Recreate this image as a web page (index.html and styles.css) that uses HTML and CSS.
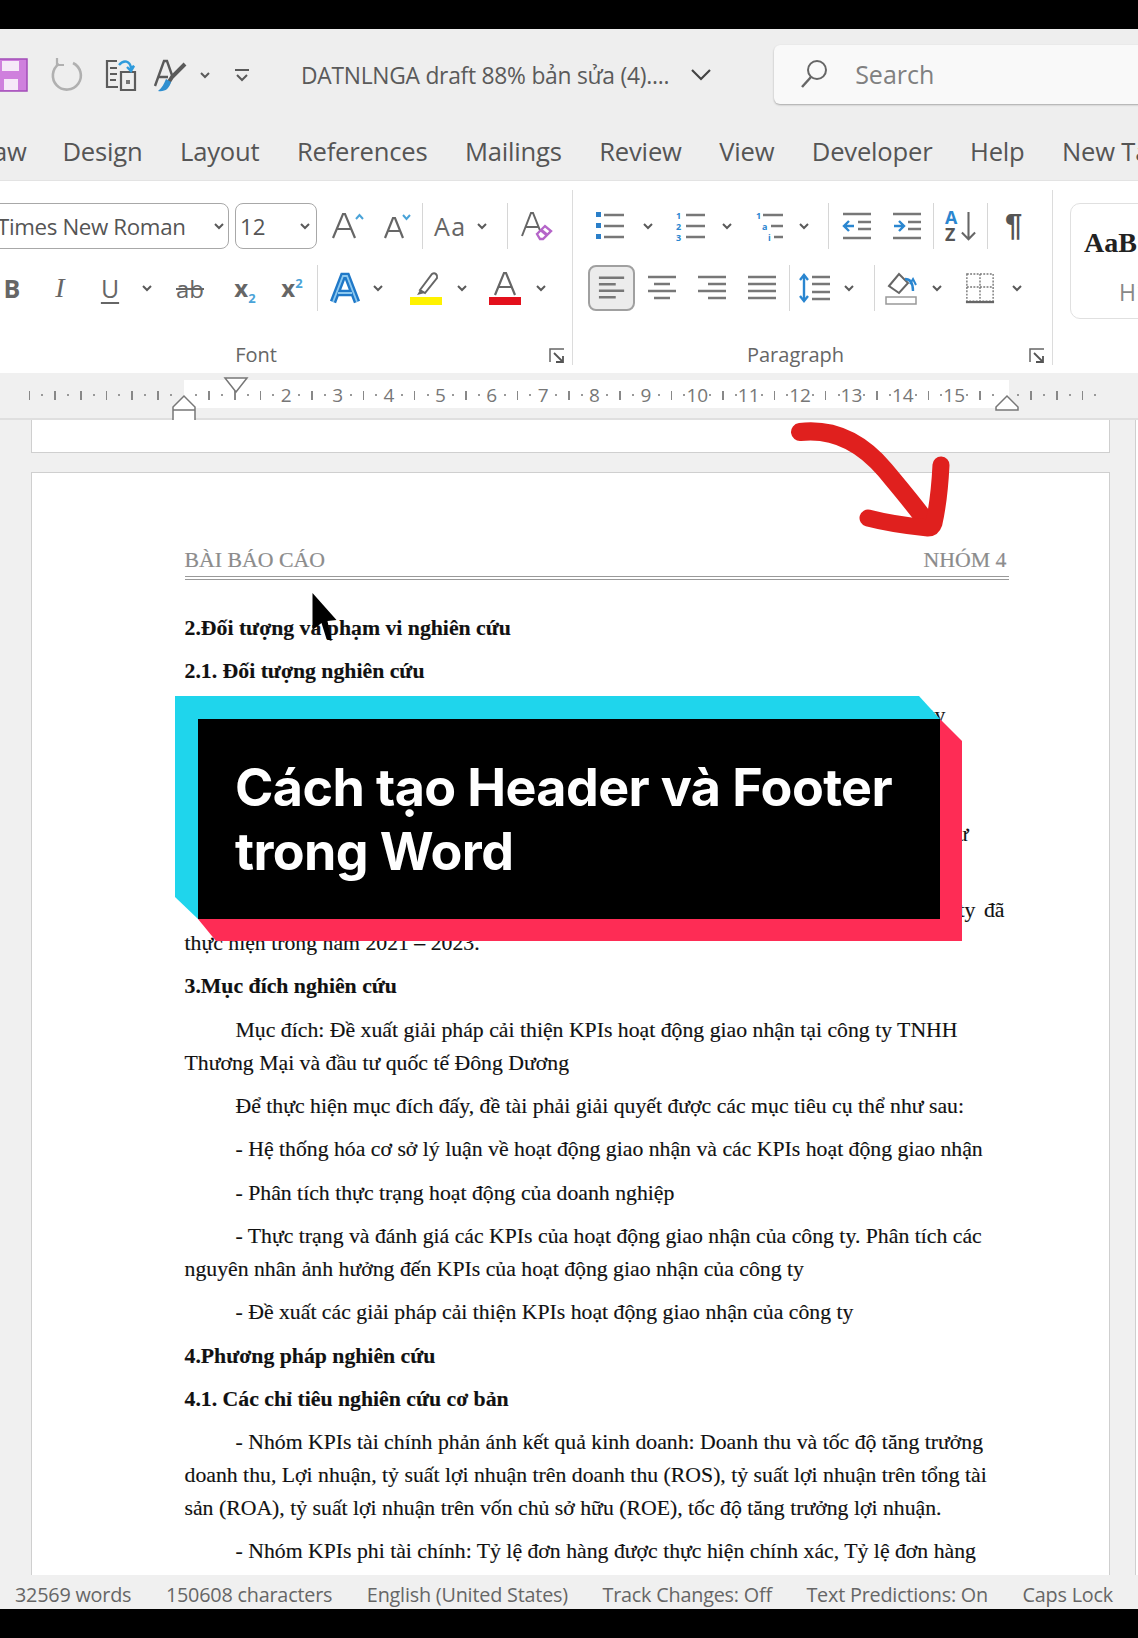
FILE: index.html
```html
<!DOCTYPE html>
<html lang="vi">
<head>
<meta charset="utf-8">
<title>Cách tạo Header và Footer trong Word</title>
<link rel="stylesheet" href="styles.css">
</head>
<body>
<svg class="defs" width="0" height="0">
  <symbol id="chev" viewBox="0 0 12 12"><path d="M2 4l4 4 4-4" fill="none" stroke="#5a5a5a" stroke-width="2"/></symbol>
  <symbol id="lines-left" viewBox="0 0 30 30"><path d="M1 4h27M1 11h18M1 18h27M1 25h18" stroke="#777" stroke-width="2.6"/></symbol>
  <symbol id="lines-center" viewBox="0 0 30 30"><path d="M1 4h28M7 11h16M1 18h28M7 25h16" stroke="#777" stroke-width="2.6"/></symbol>
  <symbol id="lines-right" viewBox="0 0 30 30"><path d="M1 4h28M11 11h18M1 18h28M11 25h18" stroke="#777" stroke-width="2.6"/></symbol>
  <symbol id="lines-just" viewBox="0 0 30 30"><path d="M1 4h28M1 11h28M1 18h28M1 25h28" stroke="#777" stroke-width="2.6"/></symbol>
</svg>
<div class="app">
  <div class="black"></div>

  <header class="titlebar">
    <div class="qat">
      <svg class="i-save" viewBox="0 0 28 34"><rect x="-6" y="1" width="33" height="32" fill="#cf80dd" stroke="#a34cb8" stroke-width="1.500"/><rect x="2" y="3" width="17" height="10" fill="#f6e9f8"/><rect x="4" y="21" width="14" height="11" fill="#f6e9f8"/></svg>
      <svg class="i-redo m23" viewBox="0 0 32 34"><path d="M9 6A14 14 0 1 0 23 5" fill="none" stroke="#b0b0b0" stroke-width="2.600"/><path d="M7 0v7h7" fill="none" stroke="#b0b0b0" stroke-width="2.200"/></svg>
      <svg class="i-doc m23" viewBox="0 0 32 34"><path d="M12 3H2v26h11M5 10h7M5 16h7M5 22h6" fill="none" stroke="#5c5c5c" stroke-width="2.200"/><path d="M16 14h14v18H16z" fill="none" stroke="#5c5c5c" stroke-width="2.200"/><path d="M14 7c5-6 11-4 12 3l3-2-3 5-4-4" fill="none" stroke="#2f9bdc" stroke-width="2.400"/><rect x="21" y="22" width="4" height="4" fill="#777"/></svg>
      <svg class="i-brush m16" viewBox="0 0 32 34"><path d="M2 28L11 3h3l6 17M6 19h9" fill="none" stroke="#5a5a5a" stroke-width="2.400"/><path d="M32 6L19 19l-5 8" fill="none" stroke="#5a5a5a" stroke-width="4"/><path d="M5 33c7 1 11-2 13-9l-5-3c-2 5-4 9-8 12z" fill="#2f8fd0"/></svg>
      <svg class="chev m14"><use href="#chev"/></svg>
      <svg class="i-more m23" viewBox="0 0 16 16"><path d="M1 3h14" stroke="#5a5a5a" stroke-width="2"/><path d="M3 8l5 5 5-5" fill="none" stroke="#5a5a5a" stroke-width="2"/></svg>
      <span class="doc-title">DATNLNGA draft 88% bản sửa (4)....</span>
      <svg class="i-caret" viewBox="0 0 20 12"><path d="M1 1l9 9 9-9" fill="none" stroke="#444" stroke-width="2.200"/></svg>
      <div class="search">
        <svg class="i-search" viewBox="0 0 28 30"><circle cx="17" cy="11" r="9" fill="none" stroke="#666" stroke-width="2"/><path d="M11 18L2 28" stroke="#666" stroke-width="2.500"/></svg>
        <span>Search</span>
      </div>
    </div>
    <nav class="tabs">
      <span class="tab-cut">aw</span>
      <span>Design</span><span>Layout</span><span>References</span><span>Mailings</span><span>Review</span><span>View</span><span>Developer</span><span>Help</span><span>New Tab</span>
    </nav>
  </header>

  <section class="ribbon">
    <div class="group group-font">
      <div class="row">
        <div class="combo combo-font"><span>Times New Roman</span><svg class="chev"><use href="#chev"/></svg></div>
        <div class="combo combo-size"><span>12</span><svg class="chev"><use href="#chev"/></svg></div>
        <svg class="w33 m14" viewBox="0 0 33 32"><path d="M2 28L12 4h2l10 24M6 19h14" fill="none" stroke="#666" stroke-width="2.200"/><path d="M25 9l3.500-4 3.500 4" fill="none" stroke="#4aa3d8" stroke-width="2"/></svg>
        <svg class="w28 m20" viewBox="0 0 28 30"><path d="M1 27L9 7h2l8 20M4 20h12" fill="none" stroke="#666" stroke-width="2.200"/><path d="M19 4l3.500 4L26 4" fill="none" stroke="#4aa3d8" stroke-width="2"/></svg>
        <i class="sep m10"></i>
        <span class="aa m11">Aa</span>
        <svg class="chev m8"><use href="#chev"/></svg>
        <i class="sep m19"></i>
        <svg class="w32 m12" viewBox="0 0 32 32"><path d="M2 26L11 3h2l8 20M5 17h13" fill="none" stroke="#666" stroke-width="2"/><path d="M17 24l8-8 6 5-8 8h-3z" fill="#fff" stroke="#b565c9" stroke-width="2.400"/><path d="M21 20l6 5" stroke="#b565c9" stroke-width="3"/></svg>
      </div>
      <div class="row">
        <b class="fmt fmt-b">B</b>
        <i class="fmt fmt-i m28">I</i>
        <span class="fmt fmt-u m29">U</span>
        <svg class="chev m20"><use href="#chev"/></svg>
        <span class="fmt fmt-ab m20">ab</span>
        <span class="fmt fmt-x m23">x<sub>2</sub></span>
        <span class="fmt fmt-x m17">x<sup>2</sup></span>
        <i class="sep m10"></i>
        <svg class="w32 m11" viewBox="0 0 32 34"><path d="M4 31L14 5h4l10 26M9 22h14" fill="none" stroke="#1f78c8" stroke-width="6.500"/><path d="M4 31L14 5h4l10 26M9 22h14" fill="none" stroke="#8cc8ef" stroke-width="1.800"/></svg>
        <svg class="chev m11"><use href="#chev"/></svg>
        <svg class="w32 m26" viewBox="0 0 32 34"><path d="M10 19L22 3c3-2 6 1 5 4L15 22z" fill="#fff" stroke="#666" stroke-width="2"/><path d="M10 19l5 3-8 2z" fill="#666"/><rect x="0" y="26" width="32" height="8" fill="#fff200"/></svg>
        <svg class="chev m14"><use href="#chev"/></svg>
        <svg class="w32 m21" viewBox="0 0 32 34"><path d="M6 24L15 2h2l9 22M10 16h12" fill="none" stroke="#666" stroke-width="2.200"/><rect x="0" y="26" width="32" height="8" fill="#e3101c"/></svg>
        <svg class="chev m14"><use href="#chev"/></svg>
      </div>
      <div class="group-label">Font
        <svg class="launcher launcher-font" viewBox="0 0 16 16"><path d="M1 14V1h14" fill="none" stroke="#666" stroke-width="1.500"/><path d="M5 5l8 8M7 14h7V8" fill="none" stroke="#555" stroke-width="1.800"/></svg>
      </div>
    </div>

    <div class="group group-para">
      <div class="row">
        <svg class="w30 m22" viewBox="0 0 30 30"><path d="M9 4h20M9 15h20M9 26h20" stroke="#777" stroke-width="2.600"/><path d="M1 1h5v5H1zM1 12h5v5H1zM1 23h5v5H1z" fill="#2a7fc9"/></svg>
        <svg class="chev m17"><use href="#chev"/></svg>
        <svg class="w30 m21" viewBox="0 0 30 30"><path d="M11 4h19M11 15h19M11 26h19" stroke="#777" stroke-width="2.600"/><text x="1" y="8" class="num">1</text><text x="1" y="19" class="num">2</text><text x="1" y="30" class="num">3</text></svg>
        <svg class="chev m16"><use href="#chev"/></svg>
        <svg class="w28 m23" viewBox="0 0 28 30"><path d="M7 4h20M15 15h12M18 26h9" stroke="#777" stroke-width="2.600"/><text x="0" y="8" class="num">1</text><text x="6" y="19" class="num">a</text><text x="12" y="30" class="num">i</text></svg>
        <svg class="chev m14"><use href="#chev"/></svg>
        <i class="sep m18"></i>
        <svg class="w30 m13" viewBox="0 0 30 30"><path d="M1 3h28M16 11h13M16 18h13M1 27h28" stroke="#777" stroke-width="2.600"/><path d="M12 15H3M7 10l-5 5 5 5" fill="none" stroke="#2a86d0" stroke-width="2.400"/></svg>
        <svg class="w30 m20" viewBox="0 0 30 30"><path d="M1 3h28M16 11h13M16 18h13M1 27h28" stroke="#777" stroke-width="2.600"/><path d="M2 15h9M7 10l5 5-5 5" fill="none" stroke="#2a86d0" stroke-width="2.400"/></svg>
        <i class="sep m11"></i>
        <svg class="w33 m10" viewBox="0 0 33 34"><text x="0" y="15" class="sort-a">A</text><text x="0" y="33" class="sort-z">Z</text><path d="M25 2v29M18 24l7 7 7-7" fill="none" stroke="#666" stroke-width="2.200"/></svg>
        <i class="sep m10"></i>
        <span class="pilcrow m15">¶</span>
      </div>
      <div class="row">
        <span class="active m15"><svg class="w30"><use href="#lines-left"/></svg></span>
        <svg class="w30 m12"><use href="#lines-center"/></svg>
        <svg class="w30 m20"><use href="#lines-right"/></svg>
        <svg class="w30 m20"><use href="#lines-just"/></svg>
        <i class="sep m12"></i>
        <svg class="w32 m9" viewBox="0 0 32 30"><path d="M13 4h18M13 11h18M13 19h18M13 26h18" stroke="#777" stroke-width="2.600"/><path d="M5 2v26" stroke="#2a86d0" stroke-width="2.400"/><path d="M1 7l4-5 4 5M1 23l4 5 4-5" fill="none" stroke="#2a86d0" stroke-width="2.400"/></svg>
        <svg class="chev m12"><use href="#chev"/></svg>
        <i class="sep m19"></i>
        <svg class="w32 m10" viewBox="0 0 32 34"><path d="M4 15L14 3l9 9-9 10z" fill="none" stroke="#666" stroke-width="2"/><path d="M20 8c6 0 8 5 8 12" fill="none" stroke="#2a86d0" stroke-width="2.400"/><path d="M25 13l3-5 3 6" fill="none" stroke="#2a86d0" stroke-width="2"/><rect x="1" y="26" width="30" height="7" fill="#fff" stroke="#999" stroke-width="1.500"/></svg>
        <svg class="chev m14"><use href="#chev"/></svg>
        <svg class="w30 m22" viewBox="0 0 30 32"><path d="M1 1h28v29H1zM1 15h28M15 1v29" fill="none" stroke="#777" stroke-width="1.500" stroke-dasharray="2 1.500"/><path d="M0 31h30" stroke="#666" stroke-width="2.400"/></svg>
        <svg class="chev m16"><use href="#chev"/></svg>
      </div>
      <div class="group-label">Paragraph
        <svg class="launcher launcher-para" viewBox="0 0 16 16"><path d="M1 14V1h14" fill="none" stroke="#666" stroke-width="1.500"/><path d="M5 5l8 8M7 14h7V8" fill="none" stroke="#555" stroke-width="1.800"/></svg>
      </div>
    </div>

    <div class="styles">
      <span class="style-sample">AaB</span>
      <span class="style-name">H1</span>
    </div>
  </section>

  <div class="ruler">
    <div class="ruler-paper"></div>
    <div class="ruler-marks">
      <span><u></u></span><span><s></s></span><span><u></u></span><span><s></s></span><span><u></u></span><span><s></s></span><span><u></u></span><span><s></s></span><span><u></u></span><span><s></s></span><span><u></u></span><span><s></s></span><span></span>
      <span><s></s></span><span><u></u></span><span><s></s></span><span><u></u></span>
      <span><s></s></span><span><u></u></span><span><s></s></span><span>2</span>
      <span><s></s></span><span><u></u></span><span><s></s></span><span>3</span>
      <span><s></s></span><span><u></u></span><span><s></s></span><span>4</span>
      <span><s></s></span><span><u></u></span><span><s></s></span><span>5</span>
      <span><s></s></span><span><u></u></span><span><s></s></span><span>6</span>
      <span><s></s></span><span><u></u></span><span><s></s></span><span>7</span>
      <span><s></s></span><span><u></u></span><span><s></s></span><span>8</span>
      <span><s></s></span><span><u></u></span><span><s></s></span><span>9</span>
      <span><s></s></span><span><u></u></span><span><s></s></span><span>10</span>
      <span><s></s></span><span><u></u></span><span><s></s></span><span>11</span>
      <span><s></s></span><span><u></u></span><span><s></s></span><span>12</span>
      <span><s></s></span><span><u></u></span><span><s></s></span><span>13</span>
      <span><s></s></span><span><u></u></span><span><s></s></span><span>14</span>
      <span><s></s></span><span><u></u></span><span><s></s></span><span>15</span>
      <span><s></s></span><span><u></u></span><span><s></s></span><span></span>
      <span><s></s></span><span><u></u></span><span><s></s></span><span><u></u></span><span><s></s></span><span><u></u></span><span><s></s></span>
    </div>
    <svg class="marker marker-first" viewBox="0 0 24 24"><path d="M1 1h22L12 15z" fill="#fff" stroke="#777" stroke-width="1.500"/></svg>
    <svg class="marker marker-hang" viewBox="0 0 24 27"><path d="M1 12L12 1l11 11v14H1zM1 15h22" fill="#fff" stroke="#777" stroke-width="1.500"/></svg>
    <svg class="marker marker-right" viewBox="0 0 24 16"><path d="M1 12L12 1l11 11v3H1z" fill="#fff" stroke="#777" stroke-width="1.500"/></svg>
  </div>

  <main class="doc">
    <div class="page-prev"></div>
    <article class="page">
      <div class="page-header"><span>BÀI BÁO CÁO</span><span>NHÓM 4</span></div>
      <p class="bold">2.Đối tượng và phạm vi nghiên cứu</p>
      <p class="bold">2.1. Đối tượng nghiên cứu</p>
      <p class="in pr-a"><span class="jl">Đối tượng nghiên cứu là hoạt động giao nhận tại công ty</span><span class="out">TNHH Thương Mại và đầu tư quốc tế Đông Dương</span></p>
      <p class="bold">2.2. Phạm vi nghiên cứu</p>
      <p class="in pr-b"><span class="jl">Về không gian: Công ty TNHH Thương Mại và đầu tư</span><span class="out">quốc tế Đông Dương</span></p>
      <p class="in pr-c"><span class="jl">Về thời gian: Phân tích số liệu về hoạt động giao nhận và các KPIs của công ty đã</span><span class="out">thực hiện trong năm 2021 – 2023.</span></p>
      <p class="bold">3.Mục đích nghiên cứu</p>
      <p class="in">Mục đích: Đề xuất giải pháp cải thiện KPIs hoạt động giao nhận tại công ty TNHH<span class="out">Thương Mại và đầu tư quốc tế Đông Dương</span></p>
      <p class="in">Để thực hiện mục đích đấy, đề tài phải giải quyết được các mục tiêu cụ thể như sau:</p>
      <p class="in">- Hệ thống hóa cơ sở lý luận về hoạt động giao nhận và các KPIs hoạt động giao nhận</p>
      <p class="in">- Phân tích thực trạng hoạt động của doanh nghiệp</p>
      <p class="in">- Thực trạng và đánh giá các KPIs của hoạt động giao nhận của công ty. Phân tích các<span class="out">nguyên nhân ảnh hưởng đến KPIs của hoạt động giao nhận của công ty</span></p>
      <p class="in">- Đề xuất các giải pháp cải thiện KPIs hoạt động giao nhận của công ty</p>
      <p class="bold">4.Phương pháp nghiên cứu</p>
      <p class="bold">4.1. Các chỉ tiêu nghiên cứu cơ bản</p>
      <p class="in">- Nhóm KPIs tài chính phản ánh kết quả kinh doanh: Doanh thu và tốc độ tăng trưởng<span class="out">doanh thu, Lợi nhuận, tỷ suất lợi nhuận trên doanh thu (ROS), tỷ suất lợi nhuận trên tổng tài</span><span class="out">sản (ROA), tỷ suất lợi nhuận trên vốn chủ sở hữu (ROE), tốc độ tăng trưởng lợi nhuận.</span></p>
      <p class="in">- Nhóm KPIs phi tài chính: Tỷ lệ đơn hàng được thực hiện chính xác, Tỷ lệ đơn hàng<span class="out">giao đúng hạn, Tỷ lệ hàng hóa bị hư hỏng, mất mát</span></p>
    </article>
    <div class="page-next"></div>
    <svg class="cursor" viewBox="0 0 26 50"><path d="M1 1l24 27-9 1 4 20-5-2-5-16-9 7z" fill="#000"/></svg>
    <svg class="arrow" viewBox="0 0 170 120"><path d="M15 12C50 8 78 24 100 50 120 74 132 88 143 104" fill="none" stroke="#e0201e" stroke-width="18" stroke-linecap="round"/><path d="M156 45c-1 20-3 40-7 58-1 3-3 5-6 5-20-2-41-5-60-10" fill="none" stroke="#e0201e" stroke-width="17" stroke-linecap="round" stroke-linejoin="round"/></svg>
    <div class="banner">
      <h1>Cách tạo Header và Footer<br>trong Word</h1>
    </div>
  </main>

  <footer class="status">
    <span>32569 words</span><span>150608 characters</span><span>English (United States)</span><span>Track Changes: Off</span><span>Text Predictions: On</span><span>Caps Lock</span>
  </footer>
  <div class="black"></div>
</div>
</body>
</html>
```

FILE: styles.css
```css
* { box-sizing: border-box; }
html, body { margin: 0; padding: 0; background: #000; }
.defs { position: absolute; }
.app {
  width: 1138px; height: 1638px; overflow: hidden;
  display: flex; flex-direction: column;
  font-family: "Open Sans", "Noto Sans", sans-serif; color: #555;
}
.black { height: 29px; flex: none; background: #000; }
svg { display: block; flex: none; overflow: visible; }

.m8{margin-left:8px}.m9{margin-left:9px}.m10{margin-left:10px}.m11{margin-left:11px}.m12{margin-left:12px}.m13{margin-left:13px}
.m14{margin-left:14px}.m15{margin-left:15px}.m16{margin-left:16px}.m17{margin-left:17px}.m18{margin-left:18px}.m19{margin-left:19px}
.m20{margin-left:20px}.m21{margin-left:21px}.m22{margin-left:22px}.m23{margin-left:23px}.m26{margin-left:26px}.m28{margin-left:28px}.m29{margin-left:29px}
.w28{width:28px;height:30px}.w30{width:30px;height:30px}.w32{width:32px;height:34px}.w33{width:33px;height:32px}
.chev { width: 12px; height: 12px; }

/* title bar */
.titlebar { height: 152px; flex: none; background: #eeeeee; border-bottom: 1px solid #e3e3e3; overflow: hidden; }
.qat { height: 92px; display: flex; align-items: center; overflow: hidden; position: relative; }
.i-save { width: 28px; height: 34px; }
.i-redo { width: 32px; height: 34px; margin-left: 22px; }
.i-doc { width: 32px; height: 34px; }
.i-brush { width: 32px; height: 34px; }
.i-more { width: 16px; height: 16px; }
.doc-title { margin-left: 51px; font-size: 22.800px; white-space: nowrap; color: #5a5a5a; letter-spacing: -.25px; }
.i-caret { width: 20px; height: 12px; margin-left: 22px; }
.search {
  margin-left: 63px; width: 400px; height: 59px; flex: none;
  margin-top: -2px;
  background: #f9f9f9; border-radius: 6px; box-shadow: 0 1px 2px rgba(0,0,0,.3);
  display: flex; align-items: center; padding-left: 26px;
  font-size: 25px; color: #808080;
}
.i-search { width: 28px; height: 30px; margin-right: 27px; }
.tabs { height: 59px; display: flex; align-items: center; gap: 37.500px; font-size: 25.600px; white-space: nowrap; color: #555; letter-spacing: -.2px; padding-top: 2px; }
.tabs span { flex: none; }
.tabs .tab-cut { margin-left: -7px; width: 32px; text-align: right; }

/* ribbon */
.ribbon { height: 192px; flex: none; background: #fff; display: flex; padding: 9px 0 8px; overflow: hidden; }
.group { position: relative; border-right: 1px solid #dcdcdc; padding-top: 13px; flex: none; }
.group-font { width: 573px; }
.group-para { width: 480px; }
.row { display: flex; align-items: center; height: 46px; margin-bottom: 16px; }
.combo {
  height: 46px; display: flex; align-items: center; justify-content: space-between;
  border: 1.500px solid #a8a8a8; border-radius: 8px; font-size: 22.300px; color: #555; flex: none;
  padding: 0 3px 0 6px; background: #fff;
}
.combo-font { width: 239px; margin-left: -10px; margin-right: 6px; letter-spacing: -.35px; }
.combo-size { width: 82px; padding-left: 4px; padding-right: 5px; }
.sep { width: 1px; height: 46px; background: #d6d6d6; flex: none; display: block; }
.aa { font-size: 25px; width: 34px; letter-spacing: 1.500px; color: #666; }
.fmt { color: #666; flex: none; display: block; text-align: center; font-size: 25px; }
.fmt-b { width: 20px; margin-left: 2px; font-family: "Open Sans", sans-serif; font-weight: 700; }
.fmt-i { width: 20px; font-family: "Liberation Serif", serif; font-style: italic; font-size: 28px; }
.fmt-u { width: 22px; text-decoration: underline; text-underline-offset: 4px; text-decoration-thickness: 2px; }
.fmt-ab { width: 34px; text-decoration: line-through; text-decoration-thickness: 2px; font-size: 24px; }
.fmt-x { width: 30px; font-weight: 700; font-size: 24px; line-height: 30px; }
.fmt-x sub, .fmt-x sup { font-size: 13px; color: #4aa3d8; line-height: 0; }
.num { font: 700 9px "Open Sans", sans-serif; fill: #2a86d0; }
.sort-a { font: 700 19px "Open Sans", sans-serif; fill: #2a86d0; }
.sort-z { font: 700 19px "Open Sans", sans-serif; fill: #555; }
.pilcrow { width: 21px; font: 700 31px "Liberation Sans", sans-serif; color: #555; line-height: 34px; text-align: center; }
.active {
  width: 47px; height: 46px; display: flex; align-items: center; justify-content: center; flex: none;
  background: #ececec; border: 2px solid #a0a0a0; border-radius: 8px;
}
.active svg { width: 28px; height: 28px; }
.group-label { position: absolute; left: 0; right: 0; top: 152px; text-align: center; font-size: 20px; line-height: 26px; color: #666; height: 26px; }
.group-font .group-label { padding-right: 60px; }
.group-para .group-label { padding-right: 34px; }
.launcher { position: absolute; width: 16px; height: 16px; top: 6px; }
.launcher-font { right: 7px; }
.launcher-para { right: 7px; }
.styles {
  margin: 13px 0 0 17px; width: 120px; height: 116px; flex: none;
  border: 1.500px solid #e0e0e0; border-radius: 10px 0 0 10px;
  display: flex; flex-direction: column; padding: 22px 0 0 13px;
}
.style-sample { font: 700 28px/34px "Liberation Serif", serif; color: #222; white-space: nowrap; }
.style-name { margin: 16px 0 0 35px; font-size: 23px; color: #888; }

/* ruler */
.ruler { height: 47px; flex: none; background: #f0f0f0; border-bottom: 2px solid #dfdfdf; position: relative; padding-top: 7px; }
.ruler-paper { position: absolute; left: 184px; top: 7px; width: 825px; height: 28px; background: #fff; }
.ruler-marks { position: relative; display: flex; margin-left: 23px; height: 28px; align-items: center; top: 1px; }
.ruler-marks span {
  width: 12.850px; flex: none; display: flex; align-items: center; justify-content: center;
  font-size: 19px; color: #777; white-space: nowrap; height: 28px;
}
.ruler-marks u { display: block; width: 1.500px; height: 9px; background: #888; }
.ruler-marks s { display: block; width: 2px; height: 2px; background: #999; }
.marker { position: absolute; }
.marker-first { left: 224px; top: 4px; width: 24px; height: 24px; }
.marker-hang { left: 172px; top: 22px; width: 24px; height: 27px; }
.marker-right { left: 995px; top: 22px; width: 24px; height: 16px; }

/* document */
.doc { flex: 1; min-height: 0; position: relative; overflow: hidden; background: #f0f0f0; padding-left: 31px; }
.page-prev { width: 1079px; height: 33px; background: #fff; border: 1.500px solid #cfcfcf; border-top: 0; }
.page {
  margin-top: 19px; width: 1079px; background: #fff;
  border: 1.500px solid #cfcfcf; padding: 71px 100.500px 0 152.500px;
  font: 21.750px/32.700px "Liberation Serif", "Times New Roman", serif; color: #111;
  -webkit-text-stroke: .15px #111;
}
.page-header {
  display: flex; justify-content: space-between; color: #8c8c8c; font-size: 21.800px; line-height: 32px;
  border-bottom: 4px double #999; height: 36px; margin-bottom: 32px; padding-right: 2px;
  -webkit-text-stroke: .2px #8c8c8c;
}
.page p { margin: 0 0 10.700px; white-space: nowrap; }
.page .bold { font-weight: 700; }
.page .in { text-indent: 51px; }
.page .out { display: block; text-indent: 0; }
.page .jl { display: block; white-space: normal; text-align: justify; text-align-last: justify; }
.page .pr-a { padding-right: 63px; }
.page .pr-b { padding-right: 40px; }
.page .pr-c { padding-right: 4px; }
.page-next {
  position: absolute; right: -8px; top: 0; bottom: 0; width: 11px; background: #fff; border-left: 1.500px solid #cfcfcf;
}
.cursor { position: absolute; left: 311px; top: 172px; width: 27px; height: 50px; z-index: 2; }
.arrow { position: absolute; left: 785px; top: 0; width: 170px; height: 120px; z-index: 2; }

/* banner */
.banner {
  position: absolute; left: 175px; top: 276px; width: 787px; height: 245px; z-index: 3;
  padding: 23px 22px 22px 23px;
}
.banner::before {
  content: ""; position: absolute; inset: 0; background: #1fd5ec;
  clip-path: polygon(0 0, 744px 0, 765px 23px, 23px 223px, 0 201px);
}
.banner::after {
  content: ""; position: absolute; inset: 0; background: #fe2c55;
  clip-path: polygon(765px 23px, 787px 45px, 787px 245px, 41px 245px, 23px 223px);
}
.banner h1 {
  position: relative; z-index: 1; margin: 0; height: 200px; background: #000; color: #fff;
  font: 700 52px/64px Inter, "Open Sans", sans-serif; letter-spacing: -.6px;
  padding: 37px 0 0 37px; white-space: nowrap;
}

/* status bar */
.status {
  height: 34px; flex: none; background: #f0f0f0; color: #666; position: relative; z-index: 4;
  display: flex; justify-content: space-between; align-items: center; padding: 5px 25px 0 15px;
  font-size: 19.800px; white-space: nowrap; letter-spacing: -.2px;
}
```
